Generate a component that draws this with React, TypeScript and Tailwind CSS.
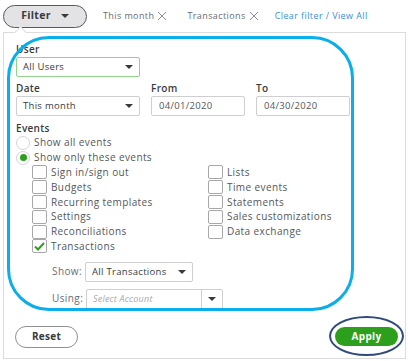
import React from 'react'

const Caret = () => (
  <span className="inline-block w-0 h-0 border-l-[4px] border-r-[4px] border-t-[4px] border-l-transparent border-r-transparent border-t-[#393a3d]" />
)

function Check({ label, checked }: { label: string; checked?: boolean }) {
  return (
    <div className="flex items-center h-[14.8px] gap-[4px]">
      <span className="w-[15px] h-[14px] border border-[#a8a8ab] rounded-[2px] bg-white flex items-center justify-center">
        {checked && (
          <svg width="11" height="9" viewBox="0 0 11 9">
            <path d="M1 4.5 L4 7.5 L10 1" fill="none" stroke="#2ca01c" strokeWidth="2" />
          </svg>
        )}
      </span>
      <span className="text-[10px] tracking-[0.4px] text-[#55565a]">{label}</span>
    </div>
  )
}

function Select({ value, className, active }: { value: string; className: string; active?: boolean }) {
  return (
    <div
      className={`flex items-center justify-between h-[20px] px-[6px] border rounded-[2px] bg-white ${
        active ? 'border-[#8fd48a]' : 'border-[#cfcfd2]'
      } ${className}`}
    >
      <span className="text-[9.5px] tracking-[0.3px] text-[#393a3d]">{value}</span>
      <Caret />
    </div>
  )
}

const X = () => (
  <svg width="10" height="10" viewBox="0 0 10 10" className="ml-[3px]">
    <path d="M1 1 L9 9 M9 1 L1 9" stroke="#8d9096" strokeWidth="1" />
  </svg>
)

export default function App() {
  return (
    <div className="w-[408px] h-[361px] bg-white relative overflow-hidden font-['Open_Sans',sans-serif]">
      {/* top filter row */}
      <div className="flex items-center h-[32px] pl-[3px]">
        <button className="flex items-center justify-center gap-[10px] w-[84px] h-[23px] rounded-full bg-[#e3e3e5] border-[1.5px] border-[#5a5a5e]">
          <span className="text-[10.5px] font-bold tracking-[0.3px] text-[#393a3d]">Filter</span>
          <Caret />
        </button>
        <span className="ml-[16px] text-[9px] tracking-[0.4px] text-[#6b6c72] flex items-center">
          This month <X />
        </span>
        <span className="ml-[20px] text-[9px] tracking-[0.4px] text-[#6b6c72] flex items-center">
          Transactions <X />
        </span>
        <span className="ml-[16px] text-[9px] tracking-[0.4px] text-[#3b8fd6]">Clear filter / View All</span>
      </div>

      {/* panel */}
      <div className="relative ml-[3px] w-[403px] h-[327px] border border-[#dcdcde] bg-white">
        <span className="absolute left-[12px] -top-[5px] w-[9px] h-[9px] rotate-45 bg-white border-l border-t border-[#dcdcde]" />

        <div className="flex flex-col pl-[12px] pt-[10px]">
          <span className="text-[10px] font-semibold tracking-[0.3px] text-[#393a3d] leading-[12px]">User</span>
          <Select value="All Users" className="w-[124px] mt-[2px]" active />

          <div className="flex gap-[11px] mt-[5px]">
            <div className="flex flex-col">
              <span className="text-[10px] font-semibold tracking-[0.3px] text-[#393a3d] leading-[12px]">Date</span>
              <Select value="This month" className="w-[124px] mt-[2px]" />
            </div>
            <div className="flex flex-col">
              <span className="text-[10px] font-semibold tracking-[0.3px] text-[#393a3d] leading-[12px]">From</span>
              <div className="w-[94px] h-[20px] mt-[2px] border border-[#cfcfd2] rounded-[2px] px-[7px] flex items-center text-[9.5px] tracking-[0.3px] text-[#55565a]">
                04/01/2020
              </div>
            </div>
            <div className="flex flex-col">
              <span className="text-[10px] font-semibold tracking-[0.3px] text-[#393a3d] leading-[12px]">To</span>
              <div className="w-[94px] h-[20px] mt-[2px] border border-[#cfcfd2] rounded-[2px] px-[7px] flex items-center text-[9.5px] tracking-[0.3px] text-[#55565a]">
                04/30/2020
              </div>
            </div>
          </div>

          <span className="text-[10px] font-semibold tracking-[0.3px] text-[#393a3d] leading-[12px] mt-[6px]">Events</span>
          <div className="flex items-center gap-[4px] h-[15px] mt-[1px]">
            <span className="w-[14px] h-[14px] rounded-full border border-[#d4d4d6] bg-white" />
            <span className="text-[10px] tracking-[0.4px] text-[#55565a]">Show all events</span>
          </div>
          <div className="flex items-center gap-[4px] h-[15px]">
            <span className="w-[14px] h-[14px] rounded-full border border-[#d4d4d6] bg-white flex items-center justify-center">
              <span className="w-[7px] h-[7px] rounded-full bg-[#2ca01c]" />
            </span>
            <span className="text-[10px] tracking-[0.4px] text-[#55565a]">Show only these events</span>
          </div>

          <div className="flex pl-[16px]">
            <div className="flex flex-col w-[176px]">
              <Check label="Sign in/sign out" />
              <Check label="Budgets" />
              <Check label="Recurring templates" />
              <Check label="Settings" />
              <Check label="Reconciliations" />
              <Check label="Transactions" checked />
            </div>
            <div className="flex flex-col">
              <Check label="Lists" />
              <Check label="Time events" />
              <Check label="Statements" />
              <Check label="Sales customizations" />
              <Check label="Data exchange" />
            </div>
          </div>

          <div className="flex items-center mt-[8px] pl-[36px]">
            <span className="w-[33px] text-[10px] tracking-[0.4px] text-[#6b6c72]">Show:</span>
            <Select value="All Transactions" className="w-[108px]" />
          </div>
          <div className="flex items-center mt-[7px] pl-[36px]">
            <span className="w-[34px] text-[10px] tracking-[0.4px] text-[#6b6c72]">Using:</span>
            <div className="flex w-[137px] h-[20px] border border-[#cfcfd2] rounded-[2px]">
              <span className="flex-1 flex items-center px-[6px] text-[9px] tracking-[0.2px] italic text-[#a8a8ab]">Select Account</span>
              <span className="w-[21px] border-l border-[#cfcfd2] flex items-center justify-center">
                <Caret />
              </span>
            </div>
          </div>

          <div className="flex items-center justify-between mt-[17px] pr-[7px]">
            <button className="w-[63px] h-[22px] rounded-full border border-[#8d9096] bg-white text-[10px] font-bold tracking-[0.3px] text-[#393a3d] -ml-[1px]">
              Reset
            </button>
            <div className="relative flex">
              <button className="w-[63px] h-[19px] rounded-full bg-[#2ca01c] text-[10px] font-bold tracking-[0.3px] text-white">
                Apply
              </button>
              <span className="absolute -left-[6px] -top-[11px] w-[75px] h-[40px] rounded-[50%] border-2 border-[#2f4a7c]" />
            </div>
          </div>
        </div>

        {/* highlight annotation */}
        <span className="absolute left-[3px] top-[3px] w-[347px] h-[275px] border-[3px] border-[#0aaeea] rounded-[42px] pointer-events-none" />
      </div>
    </div>
  )
}
